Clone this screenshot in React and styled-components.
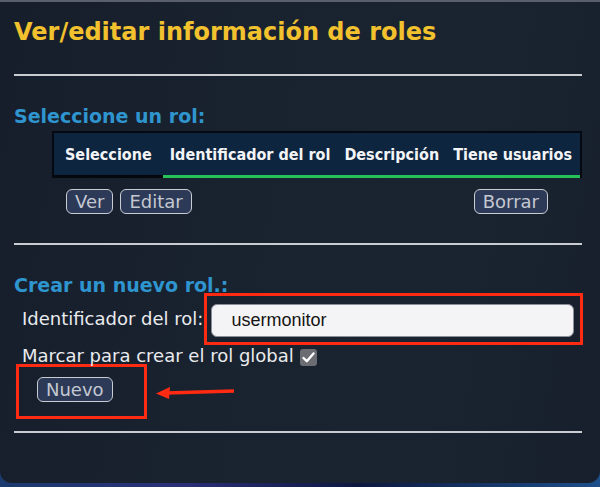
import React from "react";
import styled, { createGlobalStyle } from "styled-components";

const GlobalStyle = createGlobalStyle`
  html, body {
    margin: 0;
    padding: 0;
    width: 600px;
    height: 487px;
    overflow: hidden;
    background: linear-gradient(90deg, #1b3a6e 0%, #2a2f78 30%, #0d1840 60%, #1d4f8a 100%);
    font-family: "DejaVu Sans", Verdana, sans-serif;
  }
`;

const Panel = styled.div`
  position: relative;
  box-sizing: border-box;
  height: 483px;
  padding: 0 18px 0 14px;
  border-top: 2px solid #5a606b;
  border-radius: 0 0 12px 12px;
  background: linear-gradient(100deg, #171e2b 0%, #19222f 40%, #1a2431 70%, #171f2c 100%);
`;

const Title = styled.h1`
  margin: 0;
  padding-top: 16px;
  font-size: 24px;
  font-weight: bold;
  color: #f2c12e;
  line-height: 28px;
`;

const Rule = styled.hr`
  margin: ${(p) => p.$top}px 0 0;
  border: none;
  height: 2px;
  background: #c9ccd1;
`;

const SectionTitle = styled.h2`
  margin: ${(p) => p.$top}px 0 0;
  font-size: 19px;
  font-weight: bold;
  color: #2f95cf;
  line-height: 22px;
`;

const TableHead = styled.div`
  margin: 4px 0 0 38px;
  display: flex;
  align-items: center;
  height: 45px;
  background: #0e2540;
  border: 2px solid #050a12;
  border-bottom: none;
`;

const Th = styled.div`
  font-family: "DejaVu Sans Condensed", "DejaVu Sans", sans-serif;
  font-stretch: condensed;
  font-weight: bold;
  font-size: 16px;
  color: #f3f4f6;
  padding: 0 ${(p) => p.$r || 7}px 0 ${(p) => p.$l || 7}px;
  flex: ${(p) => (p.$grow ? 1 : "none")};
  white-space: nowrap;
  align-self: stretch;
  display: flex;
  align-items: center;
  box-sizing: border-box;
  border-bottom: 3px solid ${(p) => (p.$line ? "#27c15a" : "#05080f")};
`;

const ButtonRow = styled.div`
  display: flex;
  gap: 7px;
  margin: 11px 0 0 52px;
  padding-right: 34px;
`;

const Button = styled.button`
  font-family: "DejaVu Sans", Verdana, sans-serif;
  font-size: 18px;
  color: #c4c8d0;
  background: #2c3a58;
  border: 1px solid #c9ccd3;
  border-radius: 6px;
  height: 25px;
  padding: 0 ${(p) => p.$pad || 8}px;
  margin-left: ${(p) => (p.$push ? "auto" : "0")};
  line-height: 22px;
`;

const FormRow = styled.div`
  display: flex;
  align-items: center;
  margin-left: 8px;
  margin-top: ${(p) => p.$top || 0}px;
`;

const Label = styled.label`
  font-size: 18px;
  color: #e9ebee;
  white-space: nowrap;
  line-height: 22px;
`;

const Highlight = styled.div`
  border: 3px solid #ff2a12;
  box-sizing: border-box;
  padding: ${(p) => p.$pad};
`;

const InputFrame = styled(Highlight)`
  margin-left: 1px;
  flex: 1;
  margin-right: -1px;
`;

const TextInput = styled.input`
  display: block;
  box-sizing: border-box;
  width: 100%;
  height: 33px;
  border: 1px solid #8b8f99;
  border-radius: 6px;
  background: #f4f4f6;
  padding: 0 0 0 19px;
  font-family: "Liberation Sans", Arial, sans-serif;
  font-size: 18px;
  color: #141414;
  outline: none;
`;

const Check = styled.span`
  display: inline-flex;
  align-items: center;
  justify-content: center;
  width: 17px;
  height: 17px;
  margin-left: 6px;
  margin-top: 3px;
  border-radius: 3px;
  background: #6b6d72;
`;

const NuevoBox = styled(Highlight)`
  margin: -3px 0 0 2px;
  width: 131px;
  height: 55px;
  padding: 10px 0 0 18px;
`;

const Arrow = styled.svg`
  position: absolute;
  left: 150px;
  top: 380px;
`;

export default function App() {
  return (
    <>
      <GlobalStyle />
      <Panel>
        <Title>Ver/editar información de roles</Title>
        <Rule $top={28} />
        <SectionTitle $top={29}>Seleccione un rol:</SectionTitle>
        <TableHead>
          <Th $l={11} $r={11}>Seleccione</Th>
          <Th $line>Identificador del rol</Th>
          <Th $line>Descripción</Th>
          <Th $line $grow>Tiene usuarios</Th>
        </TableHead>
        <ButtonRow>
          <Button>Ver</Button>
          <Button>Editar</Button>
          <Button $push>Borrar</Button>
        </ButtonRow>
        <Rule $top={29} />
        <SectionTitle $top={29}>Crear un nuevo rol.:</SectionTitle>
        <FormRow $top={-3}>
          <Label>Identificador del rol:</Label>
          <InputFrame $pad="8px 6px 5px 4px">
            <TextInput defaultValue="usermonitor" />
          </InputFrame>
        </FormRow>
        <FormRow>
          <Label>Marcar para crear el rol global</Label>
          <Check>
            <svg width="13" height="11" viewBox="0 0 13 11">
              <path d="M1.5 6 L4.8 9.2 L11.5 1.5" fill="none" stroke="#fff" strokeWidth="2.4" strokeLinecap="round" strokeLinejoin="round" />
            </svg>
          </Check>
        </FormRow>
        <NuevoBox>
          <Button>Nuevo</Button>
        </NuevoBox>
        <Rule $top={12} />
        <Arrow width="90" height="20" viewBox="0 0 90 20">
          <path d="M84 9 L16 11" stroke="#ff2a12" strokeWidth="3.5" />
          <path d="M6 11.5 L20 5 L19 17 Z" fill="#ff2a12" />
        </Arrow>
      </Panel>
    </>
  );
}
